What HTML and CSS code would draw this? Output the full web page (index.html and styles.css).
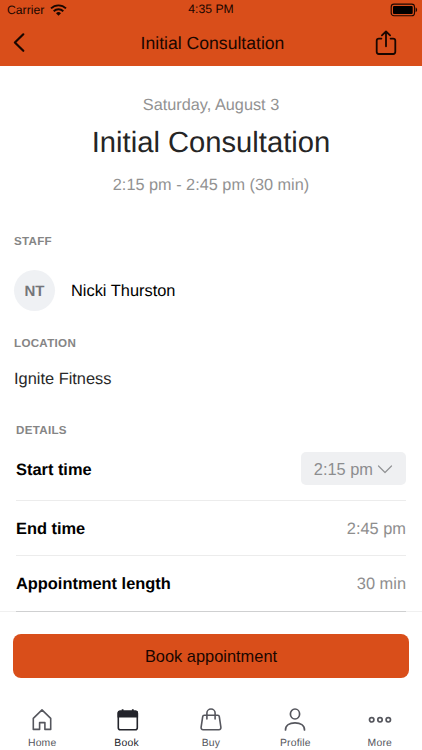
FILE: index.html
```html
<!DOCTYPE html>
<html lang="en">
  <head>
    <meta charset="UTF-8" />
    <meta name="viewport" content="width=device-width, initial-scale=1.0" />
    <title>Initial Consultation</title>
    <link rel="stylesheet" href="styles.css">
  </head>
  <body>
    <!-- Header -->
    <header>
      <div class="status-bar">
        <div class="carrier">
          <span>Carrier</span>
          <svg width="17" height="12" viewBox="0 0 17 12" fill="none" stroke="#190600" stroke-width="1.9">
            <path d="M1 4.4a10.7 10.7 0 0 1 15 0" />
            <path d="M3.7 7.2a6.9 6.9 0 0 1 9.6 0" />
            <path d="M8.5 11.7L6 9.3a3.6 3.6 0 0 1 5 0z" fill="#190600" stroke="none" />
          </svg>
        </div>
        <span class="clock">4:35 PM</span>
        <svg class="battery" width="28" height="14" viewBox="0 0 28 14">
          <rect x="1.2" y="1.1" width="23.3" height="11.6" rx="2.8" fill="none" stroke="#190600" stroke-width="1.1" />
          <rect x="3" y="3" width="19.7" height="7.9" rx="1" fill="#000" />
          <path d="M25.6 4.6c2 .7 2 3.9 0 4.6z" fill="#190600" />
        </svg>
      </div>
      <nav class="nav-bar">
        <svg width="14" height="22" viewBox="0 0 14 22" fill="none" stroke="#190600" stroke-width="2.2" stroke-linecap="round" stroke-linejoin="round">
          <path d="M11.3 2.3L2.9 10.5l8.4 8.3" />
        </svg>
        <span class="nav-title">Initial Consultation</span>
        <svg width="22" height="26" viewBox="0 0 22 26" fill="none" stroke="#190600" stroke-width="1.8" stroke-linecap="round" stroke-linejoin="round">
          <path d="M6.4 8.6H3.9a2.2 2.2 0 0 0-2.2 2.2v11a2.2 2.2 0 0 0 2.2 2.2h14.2a2.2 2.2 0 0 0 2.2-2.2v-11a2.2 2.2 0 0 0-2.2-2.2h-2.5" />
          <path d="M11 16.3V1.8M6.9 5.4L11 1.5l4.1 3.9" />
        </svg>
      </nav>
    </header>

    <!-- Main Content -->
    <main>
      <section class="summary">
        <p class="date">Saturday, August 3</p>
        <h1>Initial Consultation</h1>
        <p class="time">2:15 pm - 2:45 pm (30 min)</p>
      </section>

      <section class="staff">
        <h2>STAFF</h2>
        <div class="person">
          <span class="avatar">NT</span>
          <span>Nicki Thurston</span>
        </div>
      </section>

      <section class="location">
        <h2>LOCATION</h2>
        <p>Ignite Fitness</p>
      </section>

      <section class="details">
        <h2>DETAILS</h2>
        <div class="row row-start">
          <span class="label">Start time</span>
          <button class="time-select">
            2:15 pm
            <svg width="16" height="10" viewBox="0 0 16 10" fill="none" stroke="#929395" stroke-width="1.2" stroke-linecap="round" stroke-linejoin="round">
              <path d="M1.5 2L8 8.5 14.5 2" />
            </svg>
          </button>
        </div>
        <div class="row">
          <span class="label">End time</span>
          <span class="value">2:45 pm</span>
        </div>
        <div class="row">
          <span class="label">Appointment length</span>
          <span class="value">30 min</span>
        </div>
      </section>
    </main>

    <!-- Book button -->
    <div class="action">
      <button class="book-button">Book appointment</button>
    </div>

    <!-- Tabs -->
    <footer class="tabs">
      <a class="tab">
        <svg width="24" height="24" viewBox="0 0 24 24" fill="none" stroke="#55565d" stroke-width="1.6" stroke-linejoin="round">
          <path d="M3.3 10.3L12 1.9l8.7 8.4v11.1h-5.8v-6.8H9.6v6.8H3.3z" />
        </svg>
        <span>Home</span>
      </a>
      <a class="tab active">
        <svg width="24" height="24" viewBox="0 0 24 24">
          <rect x="3.3" y="3.4" width="19" height="18.3" rx="2" fill="none" stroke="#23242b" stroke-width="1.6" />
          <path d="M2.5 9.6V5a2.4 2.4 0 0 1 2.4-2.4h1.8V1.3h1.8v1.3h8.4V1.3h1.8v1.3h2a2.4 2.4 0 0 1 2.4 2.4v4.6z" fill="#23242b" />
        </svg>
        <span>Book</span>
      </a>
      <a class="tab">
        <svg width="24" height="24" viewBox="0 0 24 24" fill="none" stroke="#55565d" stroke-width="1.6" stroke-linecap="round" stroke-linejoin="round">
          <path d="M5.2 7.3h13.6q1.3 0 1.5 1.3l1.6 10.7q.2 2.4-2 2.4H4.1q-2.2 0-2-2.4L3.7 8.6q.2-1.3 1.5-1.3z" />
          <path d="M7.9 11V5.1a4.1 4.1 0 0 1 8.2 0V11" />
        </svg>
        <span>Buy</span>
      </a>
      <a class="tab">
        <svg width="24" height="24" viewBox="0 0 24 24" fill="none" stroke="#55565d" stroke-width="1.7" stroke-linecap="round">
          <ellipse cx="12" cy="6" rx="4.6" ry="5" />
          <path d="M2.5 21.9c0-4.5 4-7 9.5-7s9.5 2.5 9.5 7" />
        </svg>
        <span>Profile</span>
      </a>
      <a class="tab">
        <svg width="24" height="24" viewBox="0 0 24 24" fill="none" stroke="#55565d" stroke-width="1.7">
          <circle cx="3.7" cy="11.8" r="2.2" />
          <circle cx="12" cy="11.8" r="2.2" />
          <circle cx="20.3" cy="11.8" r="2.2" />
        </svg>
        <span>More</span>
      </a>
    </footer>
  </body>
</html>
```
FILE: styles.css
```css
* {
  box-sizing: border-box;
}

body {
  margin: 0;
  background-color: #fff;
  color: #000;
  font-family: "Liberation Sans", Arial, sans-serif;
  font-size: 16.4px;
  line-height: 20px;
  text-rendering: geometricPrecision;
  overflow: hidden;
}

h1,
h2,
p {
  margin: 0;
}

svg {
  display: block;
}

button {
  border: 0;
  font: inherit;
}

/* Header */
header {
  height: 66px;
  background-color: #d94e1a;
  color: #190600;
}

.status-bar {
  display: grid;
  grid-template-columns: 1fr auto 1fr;
  height: 20px;
  padding: 0 4px 0 7px;
  font-size: 12.2px;
}

.carrier {
  display: flex;
  align-items: center;
  gap: 6px;
}

.clock {
  padding-right: 3px;
  line-height: 19px;
}

.battery {
  justify-self: end;
  margin-top: 3px;
}

.nav-bar {
  display: grid;
  grid-template-columns: 1fr auto 1fr;
  align-items: center;
  height: 45px;
  padding: 0 25px 0 12px;
}

.nav-bar svg:last-child {
  justify-self: end;
}

.nav-title {
  padding-left: 16px;
  font-size: 17.6px;
}

/* Appointment summary */
.summary {
  text-align: center;
  color: #929292;
}

.date {
  padding-top: 29px;
  font-size: 16.3px;
}

h1 {
  margin-top: 11px;
  color: #252525;
  font-size: 29.2px;
  font-weight: normal;
  line-height: 34px;
}

.time {
  margin-top: 15px;
  font-size: 16.3px;
}

h2 {
  color: #858585;
  font-size: 11.6px;
  line-height: 14px;
  letter-spacing: 0.3px;
}

.staff,
.location {
  padding-left: 14px;
}

.staff {
  margin-top: 40px;
}

.person {
  display: flex;
  align-items: center;
  gap: 16px;
  margin-top: 21px;
}

.avatar {
  width: 41px;
  height: 41px;
  border-radius: 50%;
  background-color: #eff1f4;
  color: #74757a;
  font-weight: bold;
  line-height: 43px;
  text-align: center;
  font-size: 15px;
}

.location {
  margin-top: 26px;
  color: #292929;
}

.location p {
  margin-top: 18px;
}

/* Details */
.details {
  margin: 35px 16px 0;
}

.row {
  display: flex;
  align-items: center;
  justify-content: space-between;
  height: 55px;
  padding-top: 2px;
  border-bottom: 1px solid #ececec;
}

.row-start {
  height: 63px;
}

.row:last-child {
  height: 56px;
  padding-top: 1px;
  border-color: #dcdddf;
}

.label {
  font-weight: bold;
}

.value {
  color: #8e8e8e;
}

.time-select {
  display: flex;
  align-items: center;
  gap: 4px;
  height: 33px;
  margin-bottom: 3px;
  padding: 0 13px;
  border-radius: 5px;
  background-color: #eff0f2;
  color: #8c8d8f;
}

/* Book button */
.action {
  margin-top: -1px;
  padding: 22px 13px 0;
  border-top: 1px solid rgba(0, 0, 0, 0.06);
}

.book-button {
  display: block;
  width: 100%;
  height: 44px;
  border-radius: 8px;
  background-color: #d94e1a;
  color: #190600;
}

/* Tabs */
.tabs {
  display: grid;
  grid-template-columns: repeat(5, 1fr);
  margin-top: 30px;
}

.tab {
  display: flex;
  flex-direction: column;
  align-items: center;
  gap: 5px;
  color: #55565d;
  font-size: 10.4px;
  line-height: 14px;
  letter-spacing: 0.2px;
}

.active {
  color: #23242b;
}
```
